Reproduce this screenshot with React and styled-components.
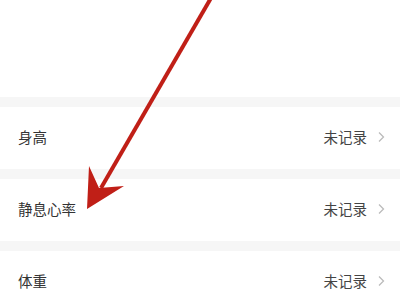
import React from "react";
import styled, { createGlobalStyle } from "styled-components";

const Global = createGlobalStyle`
  html, body { margin: 0; padding: 0; background: #fff; }
  body { font-family: "Noto Sans CJK SC", "Noto Sans", sans-serif; }
`;

const Page = styled.div`
  position: relative;
  width: 400px;
  height: 296px;
  overflow: hidden;
  background: #fff;
`;

const TopBlank = styled.div`
  height: 97px;
`;

const Band = styled.div`
  height: 10px;
  background: #f6f6f6;
`;

const Row = styled.div`
  height: 62px;
  display: flex;
  align-items: center;
  justify-content: space-between;
  padding: 0 15px 3px 18px;
  box-sizing: border-box;
`;

const Label = styled.span`
  font-size: 14.5px;
  color: #333;
`;

const Value = styled.span`
  display: flex;
  align-items: center;
  gap: 10px;
  font-size: 14.5px;
  color: #444;
`;

const Arrow = styled.svg`
  position: absolute;
  left: 0;
  top: 0;
  pointer-events: none;
`;

const Chevron = () => (
  <svg width="8" height="12" viewBox="0 0 8 12">
    <path d="M2 1.5 L6.5 6 L2 10.5" fill="none" stroke="#bbb" strokeWidth="1.3" />
  </svg>
);

const rows = ["身高", "静息心率", "体重"];

export default function App() {
  return (
    <Page>
      <Global />
      <TopBlank />
      {rows.map((r) => (
        <React.Fragment key={r}>
          <Band />
          <Row>
            <Label>{r}</Label>
            <Value>
              未记录
              <Chevron />
            </Value>
          </Row>
        </React.Fragment>
      ))}
      <Arrow width="400" height="296" viewBox="0 0 400 296">
        <line x1="211" y1="-2" x2="101" y2="188" stroke="#c01f17" strokeWidth="4" />
        <path d="M87 209 L89 166 L99 188 L124 186 Z" fill="#c01f17" />
      </Arrow>
    </Page>
  );
}
